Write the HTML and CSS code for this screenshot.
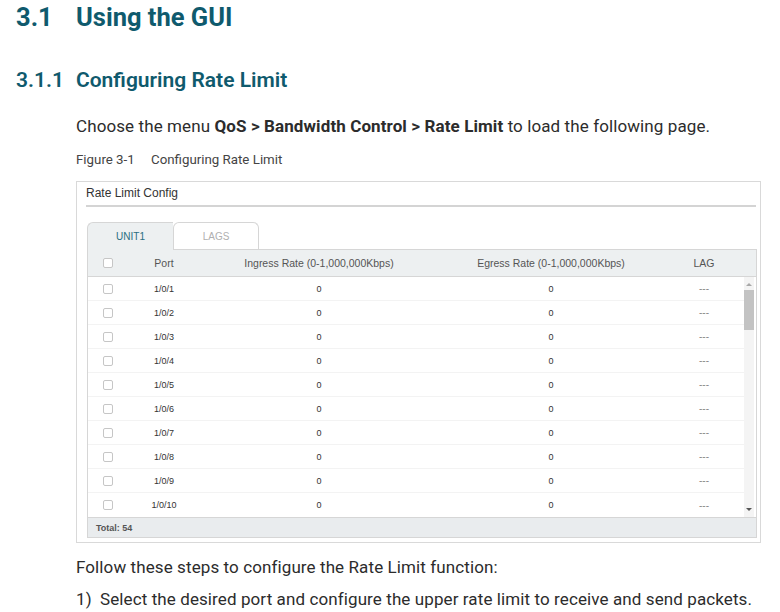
FILE: index.html
```html
<!DOCTYPE html>
<html>
<head>
<meta charset="utf-8">
<link rel="stylesheet" href="styles.css">
</head>
<body>
<h1 class="h1"><span class="num">3.1</span><span>Using the GUI</span></h1>
<h2 class="h2"><span class="num">3.1.1</span><span>Configuring Rate Limit</span></h2>
<div class="content">
  <p class="para">Choose the menu <b>QoS &gt; Bandwidth Control &gt; Rate Limit</b> to load the following page.</p>
  <p class="caption"><span class="fig">Figure 3-1</span>Configuring Rate Limit</p>
  <div class="figure">
    <div class="fig-title">Rate Limit Config</div>
    <div class="panel">
      <div class="tabs">
        <div class="tab active">UNIT1</div>
        <div class="tab">LAGS</div>
      </div>
      <div class="table">
        <div class="thead">
          <div class="cell"><span class="cb"></span></div>
          <div class="cell">Port</div>
          <div class="cell">Ingress Rate (0-1,000,000Kbps)</div>
          <div class="cell">Egress Rate (0-1,000,000Kbps)</div>
          <div class="cell">LAG</div>
          <div></div>
        </div>
        <div class="tbody">
          <div class="rows">
            <div class="row"><div class="cell"><span class="cb"></span></div><div class="cell">1/0/1</div><div class="cell">0</div><div class="cell">0</div><div class="cell dash">---</div></div>
            <div class="row"><div class="cell"><span class="cb"></span></div><div class="cell">1/0/2</div><div class="cell">0</div><div class="cell">0</div><div class="cell dash">---</div></div>
            <div class="row"><div class="cell"><span class="cb"></span></div><div class="cell">1/0/3</div><div class="cell">0</div><div class="cell">0</div><div class="cell dash">---</div></div>
            <div class="row"><div class="cell"><span class="cb"></span></div><div class="cell">1/0/4</div><div class="cell">0</div><div class="cell">0</div><div class="cell dash">---</div></div>
            <div class="row"><div class="cell"><span class="cb"></span></div><div class="cell">1/0/5</div><div class="cell">0</div><div class="cell">0</div><div class="cell dash">---</div></div>
            <div class="row"><div class="cell"><span class="cb"></span></div><div class="cell">1/0/6</div><div class="cell">0</div><div class="cell">0</div><div class="cell dash">---</div></div>
            <div class="row"><div class="cell"><span class="cb"></span></div><div class="cell">1/0/7</div><div class="cell">0</div><div class="cell">0</div><div class="cell dash">---</div></div>
            <div class="row"><div class="cell"><span class="cb"></span></div><div class="cell">1/0/8</div><div class="cell">0</div><div class="cell">0</div><div class="cell dash">---</div></div>
            <div class="row"><div class="cell"><span class="cb"></span></div><div class="cell">1/0/9</div><div class="cell">0</div><div class="cell">0</div><div class="cell dash">---</div></div>
            <div class="row last"><div class="cell"><span class="cb"></span></div><div class="cell">1/0/10</div><div class="cell">0</div><div class="cell">0</div><div class="cell dash">---</div></div>
          </div>
          <div class="scrollbar">
            <span class="arrow up"></span>
            <span class="thumb"></span>
            <span class="spacer"></span>
            <span class="arrow down"></span>
          </div>
        </div>
        <div class="tfoot">Total: 54</div>
      </div>
    </div>
  </div>
  <p class="para steps">Follow these steps to configure the Rate Limit function:</p>
  <p class="para step"><span class="stepnum">1)</span>Select the desired port and configure the upper rate limit to receive and send packets.</p>
</div>
</body>
</html>
```
FILE: styles.css
```css
* { box-sizing: border-box; }
body {
  margin: 0;
  background: #fff;
  font-family: Roboto, "Liberation Sans", sans-serif;
  color: #2c2c2c;
}
.h1 {
  margin: 2px 0 0 16px;
  font-size: 25.5px;
  line-height: 30px;
  font-weight: 700;
  color: #0f5a6d;
  display: flex;
}
.h1 .num { width: 60px; }
.h2 {
  margin: 35px 0 0 16px;
  font-size: 21px;
  line-height: 26px;
  font-weight: 600;
  color: #0f5a6d;
  display: flex;
}
.h2 .num { width: 60px; }
.content { padding-left: 76px; }
.para {
  margin: 22px 0 0;
  font-size: 17px;
  line-height: 22px;
  letter-spacing: 0.1px;
}
.para b { font-weight: 700; }
.caption {
  margin: 14px 0 0;
  font-size: 13.3px;
  line-height: 18px;
  color: #444;
}
.fig { display: inline-block; width: 75px; }
.figure {
  margin-top: 12px;
  width: 685px;
  border: 1px solid #d9d9d9;
  padding: 3px 4px 4px 0;
  font-family: "Liberation Sans", Arial, sans-serif;
}
.fig-title {
  margin-left: 9px;
  font-size: 12px;
  line-height: 16px;
  color: #333;
  padding-bottom: 4px;
  border-bottom: 2px solid #d4d4d4;
}
.panel { margin: 15px 0 0 10px; width: 670px; }
.tabs { display: flex; }
.tab {
  width: 86px;
  height: 27px;
  border: 1px solid #d6d6d6;
  border-bottom: none;
  border-radius: 6px 6px 0 0;
  font-size: 10px;
  line-height: 27px;
  text-align: center;
  color: #b0b0b0;
  background: #fff;
}
.tab.active {
  background: #edf0f1;
  color: #2a6f82;
  margin-bottom: -1px;
  height: 28px;
  border-right: none;
  border-radius: 6px 0 0 0;
}
.table {
  border: 1px solid #d6d6d6;
  color: #333;
}
.thead {
  display: grid;
  grid-template-columns: 40px 72px 238px 226px 80px 12px;
  height: 27px;
  background: #edf0f1;
  border-bottom: 1px solid #d6d6d6;
  font-size: 10.5px;
  color: #555;
  align-items: center;
}
.cell { text-align: center; display: flex; justify-content: center; align-items: center; }
.cb {
  display: inline-block;
  width: 10px;
  height: 10px;
  border: 1px solid #c6c6c6;
  border-radius: 2px;
  background: #fff;
}
.tbody { display: flex; height: 240px; }
.rows { width: 656px; }
.row {
  display: grid;
  grid-template-columns: 40px 72px 238px 226px 80px;
  height: 24px;
  align-items: center;
  border-bottom: 1px solid #f3f3f3;
  font-size: 9px;
  color: #333;
}
.row.last { border-bottom: none; }
.dash { color: #888; font-size: 10px; }
.scrollbar {
  width: 10px;
  background: #f4f4f4;
  display: flex;
  flex-direction: column;
  align-items: center;
}
.arrow {
  width: 0; height: 0;
  border-left: 3px solid transparent;
  border-right: 3px solid transparent;
}
.arrow.up { border-bottom: 3px solid #a8a8a8; margin-top: 6px; }
.arrow.down { border-top: 3px solid #555; margin-bottom: 6px; }
.thumb { width: 10px; height: 40px; background: #c3c3c3; margin-top: 4px; }
.spacer { flex: 1; }
.tfoot {
  height: 20px;
  line-height: 20px;
  background: #e9ecee;
  border-top: 1px solid #d6d6d6;
  padding-left: 8px;
  font-size: 9px;
  font-weight: 700;
  color: #555;
}
.steps { margin-top: 13px; }
.step { margin-top: 10px; display: flex; }
.stepnum { width: 24px; }
```
